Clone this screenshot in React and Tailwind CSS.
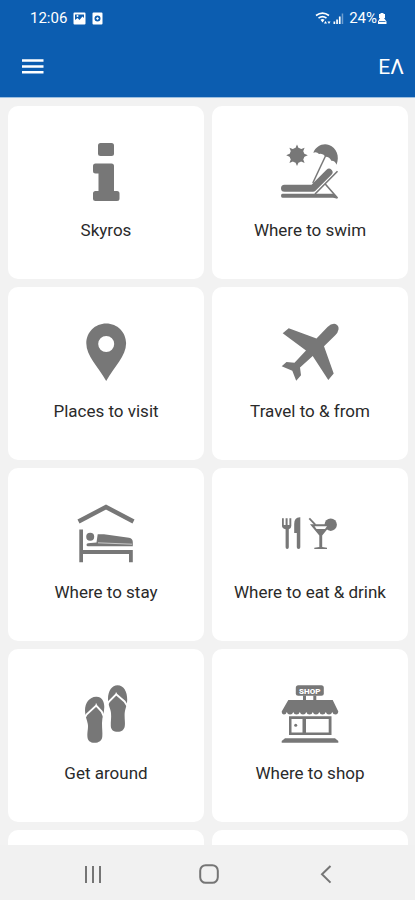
const InfoIcon = () => (
  <>
    <rect x="22" y="1" width="16" height="13" rx="2.5" />
    <path d="M19.5 21.5H35.5Q38 21.5 38 24V49H41Q43.5 49 43.5 51.5V56.5Q43.5 59 41 59H19.5Q17 59 17 56.5V51.5Q17 49 19.5 49H22.5V31.5H19.5Q17 31.5 17 29V24Q17 21.5 19.5 21.5Z" />
  </>
);

const SwimIcon = () => (
  <>
    <circle cx="17" cy="13.3" r="7.5" />
    <path d="M17 2.5L19 7H15ZM17 24L15 19.6H19ZM6.2 13.3L10.7 11.3V15.3ZM27.8 13.3L23.3 15.3V11.3ZM9.4 5.7L14 7.5L11.2 10.3ZM24.6 5.7L22.8 10.3L20 7.5ZM9.4 20.9L11.2 16.3L14 19.1ZM24.6 20.9L20 19.1L22.8 16.3Z" />
    <path d="M33.3 10.7C36 4 43 0.8 49 3C56.5 5.8 60 14 56.5 22.8Q55 18.5 51.3 18.8Q49.5 14.7 45.6 14.8Q42.5 10.6 39 12Q36.8 9.3 33.3 10.7Z" />
    <path d="M45.5 14L32.8 41" fill="none" stroke="currentColor" strokeWidth="1.5" />
    <path d="M4.5 46.3H33L49 30.3" fill="none" stroke="currentColor" strokeWidth="7" strokeLinecap="round" strokeLinejoin="round" />
    <path d="M35 52L57.5 29.3M45 41.8L57.5 56" fill="none" stroke="currentColor" strokeWidth="1.6" />
    <path d="M2.5 51.7H53.5L57.7 56.8L53 55.7H2.5Q1 55.7 1 53.7Q1 51.7 2.5 51.7Z" />
  </>
);

const PinIcon = () => (
  <path
    fillRule="evenodd"
    d="M30.2 0.5C19 0.5 10.3 9.3 10.3 20.3C10.3 33 22 43.5 30.2 58C38.4 43.5 50.1 33 50.1 20.3C50.1 9.3 41.4 0.5 30.2 0.5ZM30.2 13A8 8 0 1 1 30.2 29A8 8 0 1 1 30.2 13Z"
  />
);

const PlaneIcon = () => (
  <path d="M2.7 10.2L8.7 5.2L36.5 15.5L47.5 4Q51.5 0 55.5 0.9Q59.2 2.5 58.5 6.5Q58 9.7 55 12.5L44 23.3L53.7 50.5L48.3 57L32.7 33L20 44.5L21 52.3L16.2 57.7L12.3 47.7L1.7 43.2L6.5 39L14.5 39.8L26 27.5Z" />
);

const StayIcon = () => (
  <>
    <path d="M2.5 17.5L30 3L57.5 17.5" fill="none" stroke="currentColor" strokeWidth="4.4" />
    <path d="M3.3 25.5H7V46H56.8V58.3H53V50H7V58.3H3.3Z" />
    <circle cx="14.2" cy="32.7" r="4" />
    <path d="M21.7 30.3L28 30.3L53 33.8Q56.8 34.5 56.8 38V42.2H12Q10.5 42.2 10.5 40.7Q10.5 39.2 12 39.2L20.5 38.6Z" />
    <path d="M22 38.8L56 40.2" stroke="white" strokeWidth="0.6" />
  </>
);

const EatIcon = () => (
  <>
    <path d="M2 14.2H3.8V21H5.6V14.2H7.6V21H9.4V14.2H11.3V22Q11.3 24.3 8.8 25.3V43.3Q8.8 45 7.2 45Q5.6 45 5.6 43.3V25.3Q2 24.3 2 22Z" />
    <path d="M20.3 13.3V43.3Q20.3 45 18.6 45Q16.8 45 16.8 43.3V29H14.2V20Q14.2 13 20.3 13.3Z" />
    <circle cx="50.7" cy="20.7" r="6.2" />
    <path d="M30 20.3H51.3L42.2 31.5V43L47 43.8V45H34.3V43.8L39.3 43V31.5Z" />
    <path d="M34.5 22.3H47L45 25H36.5Z" fill="white" />
    <path d="M29.3 14.3L35.5 20.8" stroke="currentColor" strokeWidth="1.8" />
  </>
);

const SandalsIcon = () => (
  <>
    <path d="M20 11.7C25.5 11.3 28.3 16 28.3 22C28.3 28 26 32 26 38C26 44 26.7 48 26.3 51.5C26 55.5 23 57.8 18.5 57.8C14 57.8 11.6 55.5 11.4 51.5C11.2 46 12.5 43 11.8 39C11 34.5 9 31 9 25.5C9 17.5 13.5 12 20 11.7Z" />
    <path d="M41.5 0.3C48 0.3 51.2 7 51.2 14.5C51.2 21 48.6 24 48.6 30C48.6 35 49.3 38 48.8 41C48.2 45 45.5 46.8 41.8 46.8C37.5 46.8 35 45 34.8 41C34.6 36 35.5 33 35 28C34.6 23.5 32 20.5 32 14C32 6 36 0.3 41.5 0.3Z" />
    <path d="M8.3 33.5L10.5 29.5L20.2 20.5L25.7 26.5L28.3 32.5M31 20L33 16.5L40.2 9.3L48.5 16.5L52 22" fill="none" stroke="white" strokeWidth="1.9" />
    <path d="M20.2 21V18.5M40.2 10V7.5" stroke="white" strokeWidth="1" />
  </>
);

const ShopIcon = () => (
  <>
    <rect x="15.8" y="0.3" width="28" height="10.5" rx="2.5" />
    <text x="29.8" y="8.6" fill="white" textAnchor="middle" className="text-[8px] font-black">
      SHOP
    </text>
    <path d="M23 10.5H26V15.3H23ZM33.3 10.5H36.3V15.3H33.3Z" />
    <path d="M8.3 15H52.7L58.3 26.5Q58 29.5 55.5 29.5Q53 29.5 52.3 27Q51.5 29.5 49 29.5Q46.5 29.5 45.8 27Q45 29.5 42.5 29.5Q40 29.5 39.3 27Q38.5 29.5 36 29.5Q33.5 29.5 32.8 27Q32 29.5 29.5 29.5Q27 29.5 26.3 27Q25.5 29.5 23 29.5Q20.5 29.5 19.8 27Q19 29.5 16.5 29.5Q14 29.5 13.3 27Q12.5 29.5 10 29.5Q7.5 29.5 6.8 27Q6 29.5 4 29.5Q1.8 29.5 1.7 26.5Z" />
    <path fillRule="evenodd" d="M9 31.3H51.5V50H9ZM11.5 34V47.5H22.5V34ZM26 34V47.5H48.7V34Z" />
    <circle cx="15.7" cy="40.3" r="1.5" />
    <path d="M5 53.3H55L58.3 56V57.7H1.7V56Z" />
  </>
);

const tiles = [
  { label: 'Skyros', Icon: InfoIcon },
  { label: 'Where to swim', Icon: SwimIcon },
  { label: 'Places to visit', Icon: PinIcon },
  { label: 'Travel to & from', Icon: PlaneIcon },
  { label: 'Where to stay', Icon: StayIcon },
  { label: 'Where to eat & drink', Icon: EatIcon },
  { label: 'Get around', Icon: SandalsIcon },
  { label: 'Where to shop', Icon: ShopIcon },
];

const StatusBar = () => (
  <div className="flex h-9 items-center justify-between pl-[30px] pr-7 text-[15px]">
    <div className="flex items-center gap-1.5">
      <span>12:06</span>
      <svg width="13" height="13" viewBox="0 0 13 13" fill="currentColor" aria-hidden="true">
        <path fillRule="evenodd" d="M1.5 0.5H11.5Q12.5 0.5 12.5 1.5V11.5Q12.5 12.5 11.5 12.5H1.5Q0.5 12.5 0.5 11.5V1.5Q0.5 0.5 1.5 0.5ZM2 2.5V8L4.5 6L6.5 8L9.5 4.5L11 6V2.5Z" />
        <circle cx="4.5" cy="4" r="1" />
      </svg>
      <svg width="11" height="13" viewBox="0 0 11 13" fill="currentColor" aria-hidden="true">
        <path fillRule="evenodd" d="M1.5 0.5H9.5Q10.5 0.5 10.5 1.5V11.5Q10.5 12.5 9.5 12.5H1.5Q0.5 12.5 0.5 11.5V1.5Q0.5 0.5 1.5 0.5ZM5.5 3.5A3 3 0 1 0 5.5 9.5A3 3 0 1 0 5.5 3.5Z" />
        <path d="M5.5 5L7 6.5L5.5 8L4 6.5Z" />
      </svg>
    </div>
    <div className="flex items-center gap-1">
      <svg width="30" height="13" viewBox="0 0 30 13" fill="currentColor" aria-hidden="true">
        <path d="M1 3.5Q7.5 -1.2 14 3.5M3.5 6.2Q7.5 3 11.5 6.2" fill="none" stroke="currentColor" strokeWidth="1.6" />
        <path d="M5.5 7.8Q7.5 6.3 9.5 7.8L7.5 10.5ZM10.5 9L12 11.5H9ZM14 12L12.5 9.5H15.5Z" />
        <path d="M18.5 9.5H20.2V12H18.5ZM21.2 7.5H22.9V12H21.2ZM23.9 4.5H25.6V12H23.9Z" />
        <path d="M26.7 1.5H28.2V12H26.7Z" opacity="0.4" />
      </svg>
      <span className="flex items-center">
        24%
        <svg width="10" height="13" viewBox="0 0 10 13" fill="currentColor" aria-hidden="true">
          <path d="M3.5 1H6.5V2H8V6H7L9.5 9.5V12H1V9.5L3 6H2V2H3.5Z" />
          <path d="M2 9.5H8.5" stroke="#0c5db0" strokeWidth="0.8" />
        </svg>
      </span>
    </div>
  </div>
);

const Tile = ({ label, Icon }) => (
  <a href="#" className="flex flex-col items-center rounded-[10px] bg-white pt-9 pb-[37px]">
    <svg width="60" height="60" viewBox="0 0 60 60" fill="currentColor" className="text-[#777777]" aria-hidden="true">
      <Icon />
    </svg>
    <span className="mt-4 text-[17px] leading-6 text-[#2a2a2a]">{label}</span>
  </a>
);

const NavBar = () => (
  <nav className="flex h-[55px] shrink-0 items-center justify-around bg-[#f1f1f1] pl-[35px] pr-8 text-[#757575]">
    <button aria-label="Recent apps" className="pt-0.5">
      <svg width="20" height="20" viewBox="0 0 20 20" fill="none" stroke="currentColor" strokeWidth="2">
        <path d="M3 2V19M10 2V19M17 2V19" />
      </svg>
    </button>
    <button aria-label="Home" className="pt-0.5">
      <svg width="20" height="20" viewBox="0 0 20 20" fill="none" stroke="currentColor" strokeWidth="2">
        <rect x="1.2" y="1.2" width="17.6" height="17.6" rx="5.5" />
      </svg>
    </button>
    <button aria-label="Back" className="pt-0.5">
      <svg width="20" height="20" viewBox="0 0 20 20" fill="none" stroke="currentColor" strokeWidth="2">
        <path d="M15.5 2L7 10.3L15.5 18.6" />
      </svg>
    </button>
  </nav>
);

export default function App() {
  return (
    <div className="flex h-screen flex-col bg-[#f2f2f2] font-['Roboto',sans-serif]">
      <header className="shrink-0 border-b border-[#9dbfe0] bg-[#0c5db0] text-white">
        <StatusBar />
        <div className="flex h-[61px] items-center justify-between pl-[21px] pr-[11px]">
          <button aria-label="Menu">
            <svg width="23" height="18" viewBox="0 0 23 18" fill="none" stroke="currentColor" strokeWidth="2.6">
              <path d="M1 2.5H22.5M1 8.5H22.5M1 14.2H22.5" />
            </svg>
          </button>
          <button className="text-[21px] leading-6">ΕΛ</button>
        </div>
      </header>

      <main className="grid flex-1 auto-rows-max grid-cols-2 gap-2 overflow-hidden py-2 pl-2 pr-[7px]">
        {tiles.map((tile) => (
          <Tile key={tile.label} {...tile} />
        ))}
        {/* next row, scrolled out of view */}
        <div className="h-40 rounded-[10px] bg-white" />
        <div className="h-40 rounded-[10px] bg-white" />
      </main>

      <NavBar />
    </div>
  );
}
